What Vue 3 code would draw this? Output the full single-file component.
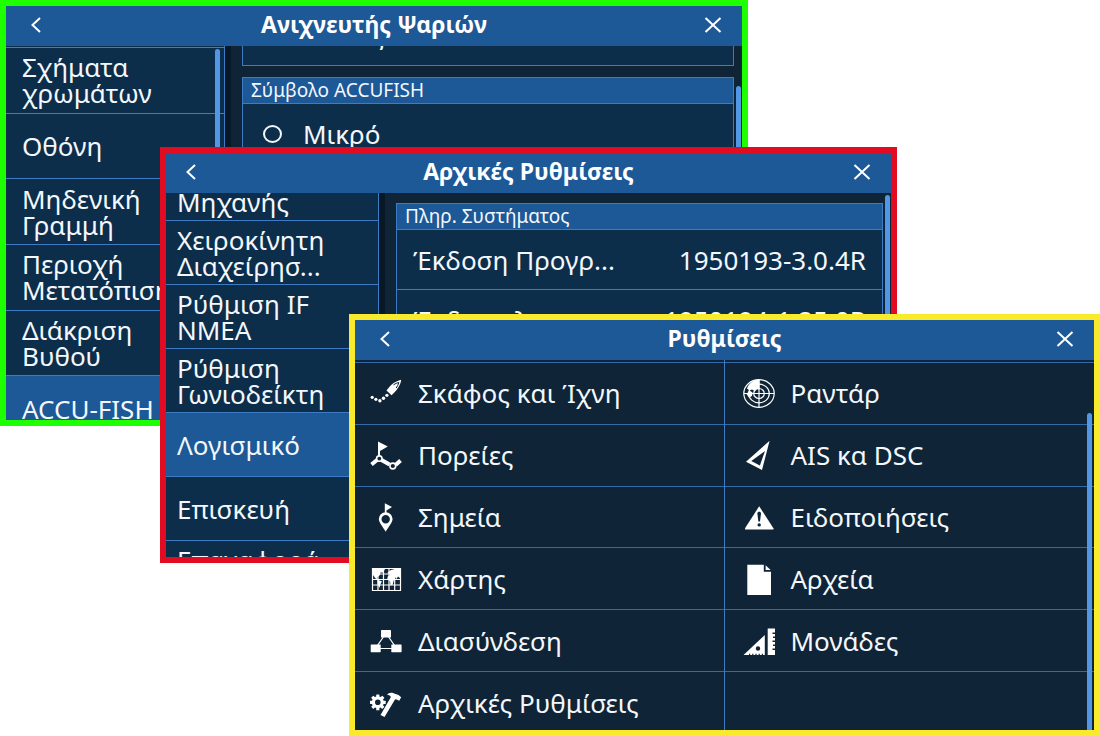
<script setup>
import { ref } from 'vue'

const fishItems = [
  'Σχήματα\nχρωμάτων',
  'Οθόνη',
  'Μηδενική\nΓραμμή',
  'Περιοχή\nΜετατόπισης',
  'Διάκριση\nΒυθού',
  'ACCU-FISH'
]
const fishCurrent = ref('ACCU-FISH')

const setupItems = [
  'Ρύθμιση\nΜηχανής',
  'Χειροκίνητη\nΔιαχείρησ...',
  'Ρύθμιση IF\nNMEA',
  'Ρύθμιση\nΓωνιοδείκτη',
  'Λογισμικό',
  'Επισκευή',
  'Επαναφορά\nΡυθμίσεων'
]
const setupCurrent = ref('Λογισμικό')

const versions = [
  { name: 'Έκδοση Προγρ...', value: '1950193-3.0.4R' },
  { name: 'Έκδοση λογισ...', value: '1950194-1.25.0R' }
]

const menu = [
  [
    { icon: 'boat', label: 'Σκάφος και Ίχνη' },
    { icon: 'route', label: 'Πορείες' },
    { icon: 'point', label: 'Σημεία' },
    { icon: 'map', label: 'Χάρτης' },
    { icon: 'network', label: 'Διασύνδεση' },
    { icon: 'tools', label: 'Αρχικές Ρυθμίσεις' }
  ],
  [
    { icon: 'radar', label: 'Ραντάρ' },
    { icon: 'ais', label: 'AIS κα DSC' },
    { icon: 'alert', label: 'Ειδοποιήσεις' },
    { icon: 'file', label: 'Αρχεία' },
    { icon: 'units', label: 'Μονάδες' },
    { icon: '', label: '' }
  ]
]
const gearTeeth = [0, 45, 90, 135, 180, 225, 270, 315]
</script>

<template>
  <main class="desktop">
    <section class="win win-fish" aria-label="Ανιχνευτής Ψαριών">
      <header class="bar">
        <button class="nav back" type="button" aria-label="Πίσω">
          <svg width="10" height="16" viewBox="0 0 10 16"><path d="M9 1 1.500 8 9 15" /></svg>
        </button>
        <h1>Ανιχνευτής Ψαριών</h1>
        <button class="nav close" type="button" aria-label="Κλείσιμο">
          <svg width="18" height="16" viewBox="0 0 18 16"><path d="M1.500 1 16.500 15M16.500 1 1.500 15" /></svg>
        </button>
      </header>
      <div class="body">
        <nav class="side side-fish">
          <button
            v-for="item in fishItems"
            :key="item"
            type="button"
            class="side-item"
            :class="{ current: item === fishCurrent }"
            @click="fishCurrent = item"
          >{{ item }}</button>
          <i class="thumb"></i>
        </nav>
        <div class="pane pane-fish">
          <div class="group group-cut">
            <label class="option"><input type="radio" name="view" /><span>Στενός</span></label>
          </div>
          <div class="group">
            <h2>Σύμβολο ACCUFISH</h2>
            <label class="option"><input type="radio" name="symbol" /><span>Μικρό</span></label>
          </div>
          <i class="thumb"></i>
        </div>
      </div>
    </section>

    <section class="win win-setup" aria-label="Αρχικές Ρυθμίσεις">
      <header class="bar">
        <button class="nav back" type="button" aria-label="Πίσω">
          <svg width="10" height="16" viewBox="0 0 10 16"><path d="M9 1 1.500 8 9 15" /></svg>
        </button>
        <h1>Αρχικές Ρυθμίσεις</h1>
        <button class="nav close" type="button" aria-label="Κλείσιμο">
          <svg width="18" height="16" viewBox="0 0 18 16"><path d="M1.500 1 16.500 15M16.500 1 1.500 15" /></svg>
        </button>
      </header>
      <div class="body">
        <nav class="side side-setup">
          <button
            v-for="item in setupItems"
            :key="item"
            type="button"
            class="side-item"
            :class="{ current: item === setupCurrent }"
            @click="setupCurrent = item"
          >{{ item }}</button>
        </nav>
        <div class="pane pane-setup">
          <div class="group">
            <h2>Πληρ. Συστήματος</h2>
            <dl>
              <div v-for="v in versions" :key="v.value" class="version">
                <dt>{{ v.name }}</dt>
                <dd>{{ v.value }}</dd>
              </div>
            </dl>
          </div>
          <i class="thumb"></i>
        </div>
      </div>
    </section>

    <section class="win win-menu" aria-label="Ρυθμίσεις">
      <header class="bar">
        <button class="nav back" type="button" aria-label="Πίσω">
          <svg width="10" height="16" viewBox="0 0 10 16"><path d="M9 1 1.500 8 9 15" /></svg>
        </button>
        <h1>Ρυθμίσεις</h1>
        <button class="nav close" type="button" aria-label="Κλείσιμο">
          <svg width="18" height="16" viewBox="0 0 18 16"><path d="M1.500 1 16.500 15M16.500 1 1.500 15" /></svg>
        </button>
      </header>
      <div class="body menu">
        <div v-for="(col, c) in menu" :key="c" class="menu-col">
          <template v-for="entry in col" :key="entry.label">
            <button v-if="entry.label" type="button" class="menu-item">
              <svg class="icon" width="32" height="32" viewBox="0 0 32 32" aria-hidden="true">
                <g v-if="entry.icon === 'boat'">
                  <circle cx="2.200" cy="20.300" r="1.600" /><circle cx="5.900" cy="22.300" r="1.600" />
                  <circle cx="9.900" cy="23.800" r="1.700" /><circle cx="13.500" cy="21.200" r="1.700" />
                  <circle cx="16.900" cy="18.300" r="1.600" />
                  <path d="M16.500 13.500C20 8.500 24.500 4.500 31.200 2.800 30.500 8.500 26.500 14 21.500 18.200Z" />
                  <path class="cut" d="M23.500 7.800C25.300 6.600 27 5.900 28.800 5.500 28.200 7.700 27.400 9.300 26.200 11" />
                </g>
                <g v-else-if="entry.icon === 'route'">
                  <path d="M8 2.500 17.800 7.500 10 12V17H8Z" />
                  <path class="thick" d="M1.500 25.500 7 21M11.500 21 19.500 25.500M25.500 26 30.500 21.500" />
                  <circle class="ring" cx="9.300" cy="19.600" r="2.700" />
                  <circle class="ring" cx="22.800" cy="27" r="2.900" />
                </g>
                <g v-else-if="entry.icon === 'point'">
                  <path d="M14.800 2.300 22 6 16.500 9.500V12H14.800Z" />
                  <path fill-rule="evenodd" d="M15.700 11.200A6.900 6.900 0 0 1 22.600 18.100C22.600 21.500 18 26.500 15.700 30.800 13.400 26.500 8.800 21.500 8.800 18.100A6.900 6.900 0 0 1 15.700 11.200ZM15.700 14A4.200 4.200 0 1 0 15.700 22.400 4.200 4.200 0 0 0 15.700 14Z" />
                </g>
                <g v-else-if="entry.icon === 'map'">
                  <path class="line" d="M2.500 5.500H30.500V27.500H2.500ZM8 5.500V27.500M13.500 5.500V27.500M19 5.500V27.500M24.700 5.500V27.500M2.500 11H30.500M2.500 16.500H30.500M2.500 22H30.500" />
                  <path d="M3 6H15L13 9.500 10.500 9.500 10 12 7 14.500 8 16.500 5.500 15.500 3 12ZM7.500 16.500 12 18.500 10.500 21 9.500 25 7.500 20ZM17.500 9.500 21 7 26 5.800H30.500V15.500L28 13.500 26.500 16 25 14 23.800 17.500 22.500 22 20.500 22.500 20 18 17 16.500 18 13 20 12Z" />
                </g>
                <g v-else-if="entry.icon === 'network'">
                  <path class="line" d="M14 11 5.500 23.500H26.500L18 11" />
                  <rect x="11" y="5" width="10" height="7.500" rx="0.600" />
                  <rect x="0.700" y="19.500" width="10" height="7.700" rx="0.600" />
                  <rect x="21.300" y="19.500" width="10.300" height="7.700" rx="0.600" />
                </g>
                <g v-else-if="entry.icon === 'tools'">
                  <rect v-for="t in gearTeeth" :key="t" x="6.200" y="7.400" width="3.200" height="4" rx="0.500" :transform="`rotate(${t} 7.800 15.300)`" />
                  <path fill-rule="evenodd" d="M7.800 9.300A6 6 0 1 0 7.800 21.300 6 6 0 0 0 7.800 9.300ZM7.800 12.500A2.800 2.800 0 1 1 7.800 18.100 2.800 2.800 0 0 1 7.800 12.500Z" />
                  <path d="M17 7.800C18.500 5.800 21 5.300 23.500 6.200L28.500 8 31.200 10.200 29.200 13.700 26 12.300 25 12.600 14.500 30 10.500 28 20.800 10.200C20.500 8.600 19 7.900 17 7.800Z" />
                </g>
                <g v-else-if="entry.icon === 'radar'">
                  <ellipse class="line" cx="16" cy="16.500" rx="15.200" ry="13.800" />
                  <ellipse class="line" cx="16" cy="16.500" rx="10.300" ry="9.300" />
                  <ellipse class="line" cx="16" cy="16.500" rx="5.300" ry="5" />
                  <path class="line" d="M0.800 16.500H31.200M16 2.700V30.300" />
                  <path d="M16.500 2.500V12.500L13 12 11.500 14 9 12.500 6.500 13.500 4 11.500C6 6 10.500 2.700 16.500 2.500ZM3.500 17 6.500 13.500 9.500 15.500 9 19 6 20.500Z" />
                </g>
                <path v-else-if="entry.icon === 'ais'" fill-rule="evenodd" d="M26.600 1.800 19 31 3 22.800ZM22 12 8.300 22 16.900 26.500Z" />
                <g v-else-if="entry.icon === 'alert'">
                  <path d="M16.200 5.200 30.400 27.300V28.400H2V27.300Z" />
                  <path class="hole" d="M14.400 12.500C14.400 10.300 18 10.300 18 12.500L17 20.500H15.400Z" />
                  <circle class="hole" cx="16.200" cy="23.900" r="1.700" />
                </g>
                <g v-else-if="entry.icon === 'file'">
                  <path d="M4.300 1.700H20.800V8.800H28V32H4.300Z" />
                  <path d="M22.600 2.300 27.600 7H22.600Z" />
                </g>
                <g v-else-if="entry.icon === 'units'">
                  <path fill-rule="evenodd" d="M0.500 30 21.800 10V30H20V28.800H18.800V30H16.800V28.800H15.600V30H13.600V28.800H12.400V30H10.400V28.800H9.200V30H7.200V28.800H6V30ZM15 21.300A2.200 2.200 0 1 0 15 25.700 2.200 2.200 0 0 0 15 21.300Z" />
                  <path d="M24.700 3.500H32V7.500H29.500V8.900H32V11.500H30V12.900H32V15.500H29.500V16.900H32V19.500H30V20.900H32V23.500H29.500V24.900H32V30H24.700Z" />
                </g>
              </svg>
              <span>{{ entry.label }}</span>
            </button>
            <div v-else class="menu-item"></div>
          </template>
        </div>
        <i class="thumb"></i>
      </div>
    </section>
  </main>
</template>

<style>
body {
  background: #fff;
}
</style>

<style scoped>
.desktop {
  display: grid;
  grid-template-columns: 160fr 189fr 399fr 149fr 203fr;
  grid-template-rows: 147fr 167fr 112fr 137fr 173fr;
  height: 100vh;
  overflow: hidden;
  font-family: "Noto Sans", "Open Sans", sans-serif;
  font-size: 26px;
  line-height: 26px;
  color: #f4f7fb;
}
.desktop *,
.desktop {
  box-sizing: border-box;
}
.win {
  display: flex;
  flex-direction: column;
  min-width: 0;
  min-height: 0;
  overflow: hidden;
  isolation: isolate;
  border: 6px solid;
  background: #0f2436;
}
.win-fish {
  grid-area: 1 / 1 / 4 / 4;
  border-color: #1eff00;
}
.win-setup {
  grid-area: 2 / 2 / 5 / 5;
  border-color: #e20c22;
}
.win-menu {
  grid-area: 3 / 3 / 6 / 6;
  border-color: #f9ea2b;
}
.bar {
  display: grid;
  grid-template-columns: 60px 1fr 60px;
  align-items: start;
  flex: 0 0 40px;
  background: #1d5897;
}
h1 {
  margin: 0;
  font-size: 23px;
  line-height: 36px;
  font-weight: 700;
  text-align: center;
  color: #fff;
}
button {
  margin: 0;
  border: 0;
  background: none;
  font: inherit;
  color: inherit;
}
.nav {
  display: flex;
  align-items: center;
  height: 38px;
  padding: 0 20px 0 25px;
}
.close {
  justify-content: flex-end;
}
.win-setup .nav {
  padding-left: 20px;
}
.nav svg {
  flex: none;
  fill: none;
  stroke: #fff;
  stroke-width: 2;
}
.body {
  position: relative;
  display: flex;
  flex: 1;
  min-height: 0;
  overflow: hidden;
}
.side {
  position: relative;
  display: grid;
  flex: none;
  border-right: 1px solid #3d7cc4;
  background: #0c2e4b;
}
.side-fish {
  width: 219px;
  grid-template-rows: repeat(6, 1fr);
  margin-bottom: -21px;
  padding-top: 1px;
}
.side-setup {
  width: 213px;
  grid-auto-rows: 64px;
  margin-top: -37px;
}
.side-item {
  padding: 0 0 0 16px;
  border-top: 1px solid #3d7cc4;
  text-align: left;
  white-space: pre-line;
}
.side-setup .side-item {
  padding-left: 11px;
}
.side-item.current {
  background: #1d5897;
}
.pane {
  position: relative;
  flex: 1;
  min-width: 0;
  border-left: 6px solid #081826;
}
.pane-fish {
  padding: 0 8px 0 11px;
}
.pane-setup {
  padding: 10px 8px 0 11px;
}
.group {
  border: 1px solid #3d7cc4;
  background: #0c2e4b;
}
.group-cut {
  margin: -42px 0 11px;
}
h2 {
  margin: 0;
  padding: 0 8px;
  border-bottom: 1px solid #3d7cc4;
  background: #1d5897;
  font-size: 19px;
  line-height: 25px;
  font-weight: 400;
}
.option {
  display: flex;
  align-items: center;
  gap: 21px;
  height: 60px;
  padding-left: 20px;
}
input {
  appearance: none;
  width: 19px;
  height: 18px;
  margin: 0;
  border: 2px solid #f4f7fb;
  border-radius: 50%;
}
input:checked {
  background: #f4f7fb;
}
dl,
dd {
  margin: 0;
}
.version {
  display: flex;
  justify-content: space-between;
  align-items: center;
  height: 60px;
  padding: 0 16px;
  border-bottom: 1px solid #3d7cc4;
}
.thumb {
  position: absolute;
  width: 5px;
  border-radius: 3px 3px 0 0;
  background: #5297e6;
}
.side-fish .thumb {
  top: 3px;
  right: 4px;
  height: 190px;
}
.pane-fish .thumb {
  top: 40px;
  right: 1px;
  bottom: 0;
}
.pane-setup .thumb {
  top: 2px;
  right: 1px;
  bottom: 0;
}
.menu {
  display: grid;
  grid-template-columns: 1fr 1fr;
}
.menu .thumb {
  top: 53px;
  right: 2px;
  bottom: 0;
}
.menu-col {
  display: grid;
  grid-template-rows: repeat(6, 1fr);
  margin-bottom: -3px;
  padding-top: 2px;
}
.menu-col:first-child {
  border-right: 1px solid #3d7cc4;
}
.menu-item {
  display: flex;
  align-items: center;
  gap: 16px;
  min-height: 0;
  padding: 0 0 0 15px;
  border-top: 1px solid #336ba8;
  text-align: left;
}
.menu-col:nth-child(2) .menu-item {
  padding-left: 18px;
}
.icon {
  flex: none;
  fill: #fff;
}
.icon .line,
.icon .thick,
.icon .ring,
.icon .cut {
  fill: none;
  stroke: #fff;
  stroke-width: 1.2;
}
.icon .thick {
  stroke-width: 4;
}
.icon .ring {
  stroke-width: 1.6;
}
.icon .cut {
  stroke: #0f2436;
  stroke-width: 1;
}
.icon .hole {
  fill: #0f2436;
}
</style>
